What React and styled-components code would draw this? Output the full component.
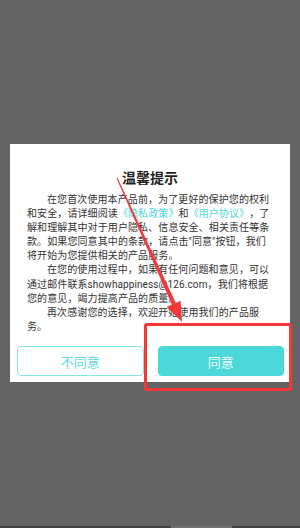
import React from "react";
import styled, { createGlobalStyle } from "styled-components";

const GlobalStyle = createGlobalStyle`
  html, body {
    margin: 0;
    padding: 0;
  }
  body {
    font-family: Roboto, "Noto Sans CJK SC", sans-serif;
  }
`;

const Screen = styled.div`
  position: relative;
  width: 300px;
  height: 528px;
  background: #646464;
  display: flex;
  flex-direction: column;
  overflow: hidden;
`;

const Overlay = styled.div`
  flex: 1;
  padding-top: 144px;
`;

const Dialog = styled.div`
  margin: 0 10px;
  height: 238px;
  box-sizing: border-box;
  background: #fff;
  padding-top: 22px;
  display: flex;
  flex-direction: column;
`;

const Title = styled.h2`
  margin: 0;
  font-family: "Noto Sans CJK SC", sans-serif;
  font-size: 14px;
  line-height: 22px;
  font-weight: bold;
  color: #1e1e1e;
  text-align: center;
`;

const Body = styled.div`
  margin: 5px 20px 0 17px;
  font-size: 10px;
  letter-spacing: 0.1px;
  line-height: 14.1px;
  color: #333;
  text-spacing-trim: space-all;
`;

const Para = styled.p`
  margin: 0;
  text-indent: 2em;
`;

const Link = styled.span`
  color: #4fd6dc;
`;

const Actions = styled.div`
  display: flex;
  gap: 14px;
  padding: 0 6px 0 7px;
  margin-top: auto;
  margin-bottom: 6px;
`;

const Button = styled.button`
  flex: 1;
  height: 30px;
  border-radius: 4px;
  font-family: "Noto Sans CJK SC", sans-serif;
  font-size: 13px;
  padding: 0;
  border: 1px solid ${p => (p.$primary ? "#4cd8d8" : "#86e6e6")};
  background: ${p => (p.$primary ? "#4cd8d8" : "#fff")};
  color: ${p => (p.$primary ? "#f4ffff" : "#62dada")};
`;

const NavEdge = styled.div`
  height: 2px;
  background: #3f4142;
  display: flex;
`;

const NavHandle = styled.div`
  width: 61px;
  margin-left: 171px;
  background: #6e6f70;
`;

const Highlight = styled.div`
  position: absolute;
  left: 144px;
  top: 323px;
  width: 148px;
  height: 68px;
  box-sizing: border-box;
  border: 3px solid #f43838;
  border-radius: 3px;
  pointer-events: none;
`;

const ArrowLayer = styled.svg`
  position: absolute;
  left: 0;
  top: 0;
  pointer-events: none;
`;

function Arrow() {
  return (
    <ArrowLayer width="300" height="528" viewBox="0 0 300 528">
      <polygon
        points="116.5,178.2 117.5,177.8 175.8,303 180.6,300.7 182,322 166.8,306.9 171.8,304.6"
        fill="#f43838"
      />
    </ArrowLayer>
  );
}

export default function App() {
  return (
    <Screen>
      <GlobalStyle />
      <Overlay>
        <Dialog>
          <Title>温馨提示</Title>
          <Body>
            <Para>
              在您首次使用本产品前，为了更好的保护您的权利和安全，请详细阅读
              <Link>《隐私政策》</Link>和<Link>《用户协议》</Link>
              ，了解和理解其中对于用户隐私、信息安全、相关责任等条款。如果您同意其中的条款，请点击"同意"按钮，我们将开始为您提供相关的产品服务。
            </Para>
            <Para>
              在您的使用过程中，如果有任何问题和意见，可以通过邮件联系showhappiness@126.com，我们将根据您的意见，竭力提高产品的质量。
            </Para>
            <Para>再次感谢您的选择，欢迎开始使用我们的产品服务。</Para>
          </Body>
          <Actions>
            <Button>不同意</Button>
            <Button $primary>同意</Button>
          </Actions>
        </Dialog>
      </Overlay>
      <NavEdge>
        <NavHandle />
      </NavEdge>
      <Highlight />
      <Arrow />
    </Screen>
  );
}
